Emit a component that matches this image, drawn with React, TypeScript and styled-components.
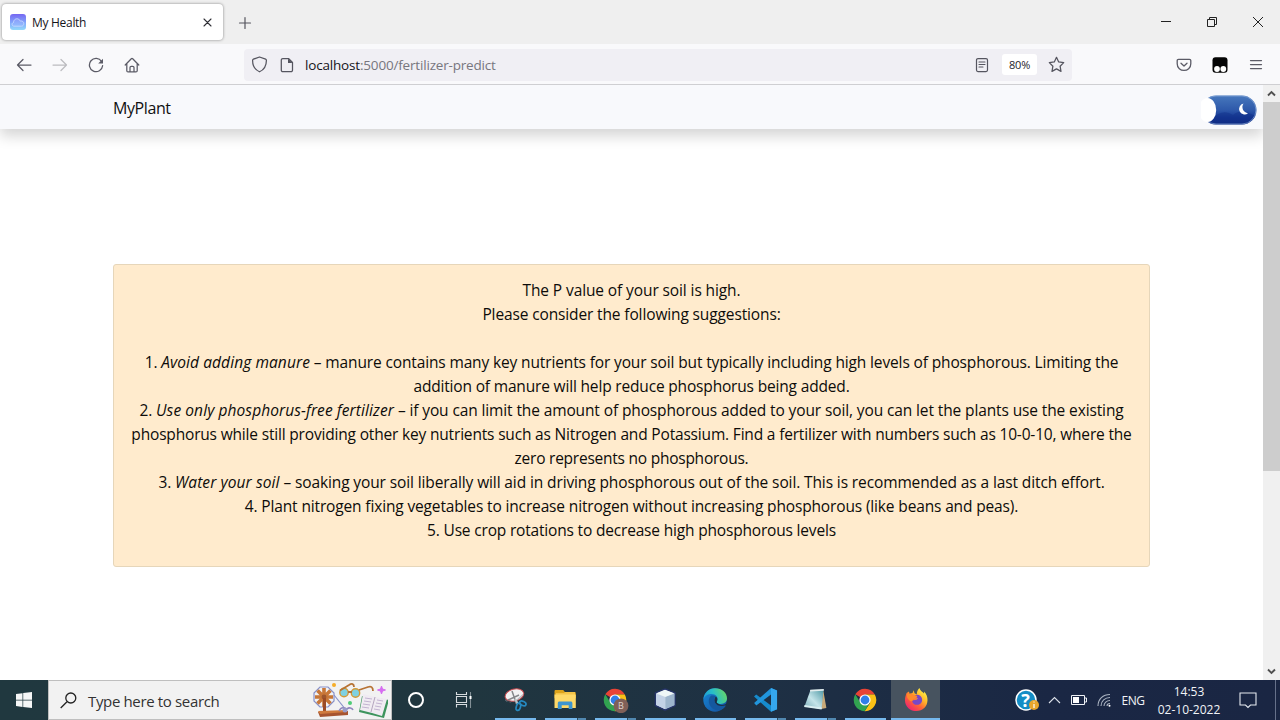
import React from 'react';
import styled, { createGlobalStyle } from 'styled-components';

const Global = createGlobalStyle`
  * { box-sizing: border-box; }
  body { margin: 0; background: #fff; overflow: hidden; font-family: "Open Sans", "Noto Sans", sans-serif; }
  svg { display: block; flex: none; }
`;

const Screen = styled.div`
  width: 1280px; height: 720px; display: flex; flex-direction: column; overflow: hidden; color: #15141a;
`;
const TitleBar = styled.header`
  height: 44px; background: #efefef; display: flex; align-items: flex-start; padding: 4px 0 0 2px;
`;
const Tab = styled.div`
  width: 221px; height: 36px; background: #fff; border-radius: 4px; box-shadow: 0 0 3px rgba(0,0,0,.45);
  display: flex; align-items: center; padding: 0 10px 0 8px;
`;
const TabTitle = styled.span`
  font-size: 12px; letter-spacing: -0.3px; margin-left: 6px; flex: 1; white-space: nowrap; line-height: 16px; padding-top: 1px;
`;
const NewTab = styled.div`
  width: 44px; height: 37px; display: grid; place-items: center;
`;
const WindowControls = styled.div`
  margin: 0 -1px 0 auto; height: 36px; display: flex; align-items: center;
`;
const ControlCell = styled.div`
  width: 46px; display: grid; place-items: center;
`;
const ToolBar = styled.div`
  height: 41px; background: #f9f9fb; border-bottom: 1px solid #cfcfd2; display: flex; align-items: center; padding: 1px 6px 0;
`;
const ToolCell = styled.div<{ $dim?: boolean }>`
  width: 36px; display: grid; place-items: center; color: ${p => (p.$dim ? '#bcbcc0' : '#5b5b66')};
`;
const UrlBar = styled.div`
  width: 828px; height: 32px; margin-left: 94px; background: #f0eff4; border-radius: 4px; display: flex; align-items: center;
  padding: 0 7px; color: #55555f;
`;
const PageInfo = styled.div`
  margin-left: 11px;
`;
const Url = styled.div`
  font-size: 13.5px; letter-spacing: -0.18px; color: #77767e; margin-left: 10px; flex: 1; white-space: nowrap;
  b { font-weight: 400; color: #15141a; }
`;
const Zoom = styled.div`
  width: 35px; height: 21px; background: #fff; border-radius: 3px; display: grid; place-items: center; color: #25242c;
  font-size: 11px; letter-spacing: -0.15px; margin: 0 11px 0 12px;
`;
const ToolsEnd = styled.div`
  margin-left: auto; display: flex; align-items: center;
`;
const Viewport = styled.div`
  height: 595px; display: flex; background: #fff;
`;
const Page = styled.main`
  width: 1263px; display: flex; flex-direction: column; overflow: hidden;
`;
const Nav = styled.nav`
  height: 44px; flex: none; background: #f8f9fc; box-shadow: 0 7px 14px rgba(0,0,0,.17); display: flex;
  align-items: center; justify-content: space-between; padding: 5px 6px 0 113px;
`;
const Brand = styled.div`
  font-size: 16px; letter-spacing: -0.4px; color: #111; line-height: 24px; padding-bottom: 4px;
`;
const Card = styled.section`
  width: 1037px; height: 303px; margin: 135px 0 0 113px; padding-top: 13px; background: #ffebcd; border: 1px solid #e6d6ba;
  border-radius: 3px; color: #0d0c0a;
`;
const Line = styled.div<{ $track: number }>`
  height: 24px; line-height: 24px; font-size: 15.5px; text-align: center; white-space: pre;
  letter-spacing: ${p => p.$track}px;
  i { letter-spacing: 0.09px; }
`;
const ScrollBar = styled.aside`
  width: 17px; background: #f0f0f0; display: flex; flex-direction: column; justify-content: space-between;
`;
const Arrow = styled.div`
  width: 17px; height: 17px; display: grid; place-items: center;
`;
const Thumb = styled.div`
  height: 369px; background: #cdcdcd; margin-bottom: auto;
`;
const TaskBar = styled.footer`
  height: 40px; display: flex; background: linear-gradient(90deg, #20383f 0, #20363f 37%, #1e3044 60%, #1a2744 82%, #1a2643 100%);
  color: #f2f4f7;
`;
const Start = styled.div`
  width: 48px; display: grid; place-items: center;
`;
const Search = styled.div`
  width: 344px; background: #f2f2f2; border: 1px solid #bfbfbf; display: flex; align-items: center; color: #333; padding: 0 3px 0 11px;
`;
const SearchText = styled.span`
  font-size: 15px; letter-spacing: -0.35px; margin-left: 11px; flex: 1; white-space: nowrap; padding-top: 2px;
`;
const SysCell = styled.div<{ $w: number }>`
  width: ${p => p.$w}px; display: grid; place-items: center;
`;
const Apps = styled.div`
  display: flex; padding-left: 2px;
`;
const AppButton = styled.div<{ $active?: boolean }>`
  width: ${p => (p.$active ? 49 : 50)}px; margin-left: ${p => (p.$active ? 1 : 0)}px;
  background: ${p => (p.$active ? '#47535f' : 'transparent')};
  display: flex; flex-direction: column; align-items: center; justify-content: space-between; padding-top: 5px;
`;
const Underline = styled.div<{ $kind: 'one' | 'many' | 'active' }>`
  height: 2px; width: ${p => (p.$kind === 'active' ? '100%' : '41px')};
  background: ${p => (p.$kind === 'many' ? 'linear-gradient(90deg,#76b9ed 32px,#28485c 32px,#28485c 33px,#5188b0 33px)' : '#76b9ed')};
`;
const Tray = styled.div`
  margin-left: auto; display: flex;
`;
const Lang = styled.div`
  width: 34px; display: grid; place-items: center; font-size: 12px; letter-spacing: -0.4px; padding-top: 1px;
`;
const Clock = styled.div`
  width: 78px; display: flex; flex-direction: column; align-items: center; font-size: 12px; line-height: 18px;
  letter-spacing: 0; padding-top: 3px;
`;
const ShowDesktop = styled.div`
  width: 5px; border-left: 1px solid #66718a;
`;

const stroke = { fill: 'none', stroke: 'currentColor', strokeLinecap: 'round' as const, strokeLinejoin: 'round' as const };

const Favicon = () => (
  <svg width="16" height="16" viewBox="0 0 16 16">
    <defs><linearGradient id="fav" x1="0" y1="0" x2="0" y2="1"><stop offset="0" stopColor="#7667f2" /><stop offset=".55" stopColor="#82a8fb" /><stop offset="1" stopColor="#93d9fa" /></linearGradient></defs>
    <rect width="16" height="16" rx="3" fill="url(#fav)" />
    <path d="M4 12.2C1.8 12.2 1.2 9.2 3.5 8.5 3.5 5.4 6.8 3.7 9 5.5c.7.4 1.1 1 1.4 1.6 2-.5 3.4.7 3.4 2.4 0 1.6-.9 2.7-2.4 2.7z" fill="#a7baff" fillOpacity=".35" stroke="#c5d8ff" strokeWidth=".9" />
  </svg>
);
const Chrome = ({ profile }: { profile?: boolean }) => (
  <svg width="28" height="28" viewBox="0 0 28 28">
    <path d="M14 15 4.3 9.3A11.2 11.2 0 0 1 23.8 9.5H14z" fill="#e94335" />
    <path d="M23.8 9.5A11.2 11.2 0 0 1 13.6 26.2L19 18 14 9.5z" fill="#fbc116" />
    <path d="M4.3 9.3A11.2 11.2 0 0 0 13.6 26.2L18.7 17.8 14 15 9 17z" fill="#31a350" />
    <circle cx="14" cy="15" r="5.6" fill="#fff" /><circle cx="14" cy="15" r="4.4" fill="#317ee8" />
    {profile && <><circle cx="20" cy="20.8" r="7.4" fill="#806058" /><text x="20" y="24" textAnchor="middle" fontSize="9" fill="#ded2cd" fontFamily="Open Sans, sans-serif">B</text></>}
  </svg>
);
const Snip = () => (
  <svg width="28" height="28" viewBox="0 0 28 28">
    <ellipse cx="13.4" cy="10" rx="9.5" ry="5.9" fill="#f3f2f3" stroke="#c94b50" strokeWidth="1" transform="rotate(-15 13.4 10)" />
    <path d="M4 14c2 4 7 4 11 1l8-7c-2 5-8 9-14 9-3 0-5-1-5-3z" fill="#b7bcc0" />
    <path d="m11 6 4.5 13M7 15l11-5" stroke="#85878a" strokeWidth="1.5" />
    <path d="m14 14 3 5" stroke="#bbc3c7" strokeWidth="2" />
    <g fill="none" stroke="#2689c0" strokeWidth="1.7"><ellipse cx="17.4" cy="21.8" rx="2.1" ry="3.7" transform="rotate(18 17.4 21.8)" /><ellipse cx="21.8" cy="18.4" rx="3.4" ry="2" transform="rotate(25 21.8 18.4)" /></g>
  </svg>
);
const Folder = () => (
  <svg width="28" height="28" viewBox="0 0 28 28">
    <path d="M3.5 6.3c0-.8.5-1.3 1.3-1.3h7.4l1.7 2h9.7c.8 0 1.2.5 1.2 1.2v5H3.5z" fill="#dda31b" /><path d="M5 8h8l1-1h10v4H5z" fill="#f4c448" />
    <path d="M3.5 9.5h21.3V23H3.5z" fill="#ffd968" /><path d="M6.8 24v-5.7c0-1 .7-1.7 1.7-1.7h11.2c1 0 1.7.7 1.7 1.7V24h-3.7v-3.8h-7V24z" fill="#3d95d0" />
  </svg>
);
const Cube = () => (
  <svg width="28" height="28" viewBox="0 0 28 28">
    <path d="M14 4 24 8v12.5L14 25 4.5 20.5V8z" fill="#dce7ef" stroke="#263468" strokeWidth="1.6" />
    <path d="M14.2 12 23.5 8.4v11.8l-9.3 4.1z" fill="#9db5cc" /><path d="m5 8.4 9.2 3.6v12.3L5 20z" fill="#c3d2e6" /><path d="m14 4.7 9.2 3.5-9 3.6-8.8-3.6z" fill="#eff7f7" />
  </svg>
);
const Edge = () => (
  <svg width="28" height="28" viewBox="0 0 28 28">
    <defs><linearGradient id="edgeTop" x1="0" y1=".6" x2="1" y2=".3"><stop stopColor="#1d9ad8" /><stop offset=".45" stopColor="#28bdc8" /><stop offset="1" stopColor="#67d765" /></linearGradient>
    <linearGradient id="edgeLow" x1="0" y1="0" x2="1" y2="1"><stop stopColor="#1688d8" /><stop offset="1" stopColor="#164f9c" /></linearGradient></defs>
    <circle cx="14" cy="15" r="11.7" fill="url(#edgeLow)" />
    <path d="M2.5 14.5C3 7.8 8 3.3 14 3.3c7 0 12.2 4.6 12 10.3-.1 4.2-4 6-8.3 5.2-2-.4-2.8-1.3-1.8-2.5 2.4-4.3-1.8-7.8-6.5-7.2-3.5.4-6 2.4-6.9 5.4z" fill="url(#edgeTop)" />
    <path d="M9.8 10.8C5.3 15.5 8.5 24.6 17 25.5c4-.5 6.6-2.8 8-5-6.4 2-11.9-1.1-12-5.4 0-1.8.7-3 1.7-3.7-1.4-.9-3.2-1.1-4.9-.6z" fill="#15589f" />
    <path d="M16.6 18.2c2.8 2.2 6.3 2.3 9.2.4l-.5 1.4c-4.5 1.9-9.4 1-11.4-2.6-.9-2.5-.2-4.6 1-5.8 1.5 1.3 2 3.3 1 4.8-.4.7-.1 1.3.7 1.8z" fill="#1d3044" />
  </svg>
);
const Code = () => (
  <svg width="28" height="28" viewBox="0 0 28 28">
    <path d="m20.1 3 6 2.5v18.8L20 26.8 3 11.5 5.2 9.4 20 20.6z" fill="#168acb" /><path d="m20.1 3-17 15 2.2 2.4L20 9.5z" fill="#2195dc" /><path d="m20 3 6 2.5v18.8L20 26.8z" fill="#35a7ee" />
  </svg>
);
const Notepad = () => (
  <svg width="28" height="28" viewBox="0 0 28 28">
    <defs><linearGradient id="note" x1="1" y1="0" x2="0" y2="1"><stop stopColor="#4f98a4" /><stop offset=".55" stopColor="#c4e4e9" /><stop offset="1" stopColor="#78acb9" /></linearGradient></defs>
    <path d="m22.2 5 3.2 18-5.400 1z" fill="#c8aa79" /><path d="M9.500 5 22.500 4.500 20.600 24 3.500 21.500z" fill="url(#note)" /><path d="m9.200 4.800 13.600-.8v1.800L9 6.400z" fill="#e3eced" /><path d="m3.500 20 17.200 2.500-.1 2-17.500-2.500z" fill="#d9eef1" />
  </svg>
);
const Firefox = () => (
  <svg width="28" height="28" viewBox="0 0 28 28">
    <defs><linearGradient id="fox" x1=".85" y1=".1" x2=".2" y2=".9"><stop stopColor="#fff044" /><stop offset=".35" stopColor="#ffb52a" /><stop offset=".65" stopColor="#ff6335" /><stop offset="1" stopColor="#ee2a6b" /></linearGradient></defs>
    <path d="M4.600 8 7 6.600l.5 2.200 3-.9 1.200-2.600.8 3 2.300 1.200C14.600 6.800 16 4.600 17.400 3c.6 2.800 3.200 4 4.600 5.400l.3-1.800c2.400 3 3.300 5.500 3.200 8.700-.2 6.500-4.800 10.800-11 10.800S3 21.500 3 15.400c0-3 .7-5.200 1.600-7.400z" fill="url(#fox)" />
    <path d="M10.200 13.200c1.200-3 5.300-4.800 8-2.400 2.700 2.400 2.600 6.400-.2 8.200-3.300 2-7.800.3-8-3.600l4.500-.6 1.700-1.600z" fill="#7748c6" />
    <path d="M5.200 9.100 9 8.700l3.200 1.400 3.100.9-.8 2-3.400 1.300c-.4 2.200-1.500 2.400-3 1.600C5.600 14.500 4.400 12 5.200 9.100z" fill="#ff8a2b" />
  </svg>
);
const SearchArt = () => (
  <svg width="76" height="36" viewBox="0 0 76 36">
    <g fill="none" stroke="#8790c8" strokeWidth="1.2"><path d="m8 5 8 0 6 6v8l-6 6H8l-6-6v-8z" /><path d="m22 13 12 15" /></g>
    <g stroke="#c87738" strokeWidth="3.6"><path d="M12 6v19M3 15h18M5.500 8.500l13 13M18.500 8.500l-13 13" /></g>
    <circle cx="12" cy="15" r="2.400" fill="#9d562d" /><path d="M11 16h3v14h-3z" fill="#9b4b27" />
    <path d="m6 30 30-1v4L8 35z" fill="#a65430" /><path d="m6 29 29-1v2L8 32z" fill="#cf7a3e" />
    <path d="M27 29c3-6 7-2 8-2 2-2 5-1 6 1" fill="none" stroke="#8f86bd" strokeWidth="1.600" /><circle cx="33" cy="28" r="2.500" fill="#9a9cc7" />
    <circle cx="22" cy="3" r="2" fill="#f6ad28" /><circle cx="38" cy="21" r="2" fill="#4fcc76" />
    <g fill="#7ed1e1" stroke="#d39a36" strokeWidth="1.400"><circle cx="32" cy="10.500" r="4.200" /><circle cx="43.500" cy="11" r="4.200" /></g>
    <g fill="none" stroke="#b77335" strokeWidth="1.800"><path d="M28 8.500 37 3c3-2 5-1 5 2M47 8l9-3c3-1 5 0 5 4M36 10h4" /></g>
    <path d="m50 14-3 16 25 6 5-18z" fill="#3d945d" /><path d="m51 12 12 3 12 2-5 17-10-3-12-3z" fill="#f0ebf2" /><path d="m63 15-4 15" stroke="#b5a5bf" />
    <g stroke="#b6a5c8" strokeWidth=".8"><path d="m53 16 7 1m-8 2 7 1m-8 2 7 1m-8 2 7 1M65 18l6 1m-7 2 6 1m-7 2 6 1m-7 2 6 1" /></g>
    <path d="m69.500 4 1 3 3 1-3 1-1 3-1-3-3-1 3-1z" fill="#d66df0" stroke="#d66df0" />
  </svg>
);
const Toggle = () => (
  <svg width="56" height="30" viewBox="0 0 56 30">
    <defs><linearGradient id="sky" x1="0" y1="0" x2="0" y2="1"><stop stopColor="#4778bd" /><stop offset=".5" stopColor="#2e59aa" /><stop offset=".75" stopColor="#163895" /><stop offset="1" stopColor="#102a80" /></linearGradient>
    <clipPath id="pill"><rect x=".5" y=".5" width="55" height="29" rx="14.500" /></clipPath></defs>
    <rect x=".5" y=".5" width="55" height="29" rx="14.500" fill="url(#sky)" />
    <g clipPath="url(#pill)"><path d="M10 24q12-11 22-4 8-8 24 2v10H10z" fill="#102e88" fillOpacity=".45" /></g>
    <rect x="1" y="1" width="54" height="28" rx="14" fill="none" stroke="#8faedb" strokeOpacity=".65" />
    <path d="M0 0h8L5 4v22l3 4H0z" fill="#f8f9fc" /><ellipse cx="6.500" cy="15" rx="8.700" ry="12" fill="#fff" />
    <path d="M42.500 8.500A5.500 5.500 0 1 0 47 18.200 6.200 6.200 0 0 1 42.500 8.500z" fill="#fff" />
  </svg>
);

const apps: { icon: React.ReactNode; kind: 'one' | 'many' | 'active' }[] = [
  { icon: <Snip />, kind: 'one' }, { icon: <Folder />, kind: 'many' }, { icon: <Chrome profile />, kind: 'many' },
  { icon: <Cube />, kind: 'one' }, { icon: <Edge />, kind: 'one' }, { icon: <Code />, kind: 'many' },
  { icon: <Notepad />, kind: 'many' }, { icon: <Chrome />, kind: 'one' }, { icon: <Firefox />, kind: 'active' },
];

const lines: { text: React.ReactNode; track: number }[] = [
  { text: 'The P value of your soil is high.', track: -0.106 },
  { text: 'Please consider the following suggestions:', track: -0.13 },
  { text: ' ', track: 0 },
  { text: <>1. <i>Avoid adding manure</i> – manure contains many key nutrients for your soil but typically including high levels of phosphorous. Limiting the</>, track: -0.136 },
  { text: 'addition of manure will help reduce phosphorus being added.', track: -0.17 },
  { text: <>2. <i>Use only phosphorus-free fertilizer</i> – if you can limit the amount of phosphorous added to your soil, you can let the plants use the existing</>, track: -0.12 },
  { text: 'phosphorus while still providing other key nutrients such as Nitrogen and Potassium. Find a fertilizer with numbers such as 10-0-10, where the', track: -0.177 },
  { text: 'zero represents no phosphorous.', track: -0.24 },
  { text: <>3. <i>Water your soil</i> – soaking your soil liberally will aid in driving phosphorous out of the soil. This is recommended as a last ditch effort.</>, track: -0.115 },
  { text: '4. Plant nitrogen fixing vegetables to increase nitrogen without increasing phosphorous (like beans and peas).', track: -0.145 },
  { text: '5. Use crop rotations to decrease high phosphorous levels', track: -0.18 },
];

export default function App() {
  return (
    <Screen>
      <Global />
      <TitleBar>
        <Tab>
          <Favicon />
          <TabTitle>My Health</TabTitle>
          <svg width="11" height="11" viewBox="0 0 11 11" color="#303036"><path d="m2 2 7 7m0-7-7 7" {...stroke} strokeWidth="1.100" /></svg>
        </Tab>
        <NewTab><svg width="14" height="14" viewBox="0 0 14 14" color="#55555e"><path d="M7 1.500v11M1.500 7h11" {...stroke} strokeWidth="1.200" /></svg></NewTab>
        <WindowControls>
          <ControlCell><svg width="12" height="12" viewBox="0 0 12 12"><path d="M1 5.500h10" stroke="#222" /></svg></ControlCell>
          <ControlCell><svg width="12" height="12" viewBox="0 0 12 12"><path d="M1.500 3.500h7v7h-7zM3.500 3.500v-2h7v7h-2" fill="none" stroke="#222" /></svg></ControlCell>
          <ControlCell><svg width="12" height="12" viewBox="0 0 12 12"><path d="m1 1 10 10M11 1 1 11" stroke="#222" /></svg></ControlCell>
        </WindowControls>
      </TitleBar>
      <ToolBar>
        <ToolCell><svg width="16" height="16" viewBox="0 0 16 16"><path d="M15 8H1.500M7 2.500 1.500 8 7 13.500" {...stroke} strokeWidth="1.250" /></svg></ToolCell>
        <ToolCell $dim><svg width="16" height="16" viewBox="0 0 16 16"><path d="M1 8h13.500M9 2.500 14.500 8 9 13.500" {...stroke} strokeWidth="1.250" /></svg></ToolCell>
        <ToolCell><svg width="16" height="16" viewBox="0 0 16 16"><path d="M13.600 4.500A6.600 6.600 0 1 0 14.600 8.700" {...stroke} strokeWidth="1.300" /><path d="M15 1.700v4.800h-4.800z" fill="currentColor" /></svg></ToolCell>
        <ToolCell><svg width="16" height="16" viewBox="0 0 16 16"><path d="M1.200 8 7.300 1.700a1 1 0 0 1 1.400 0L14.800 8M2.800 6.800v6.900c0 .7.500 1.200 1.200 1.200h8c.7 0 1.200-.5 1.200-1.200V6.800M6 14.500v-4c0-.7.500-1.200 1.200-1.200h1.600c.7 0 1.200.5 1.200 1.200v4" {...stroke} strokeWidth="1.250" /></svg></ToolCell>
        <UrlBar>
          <svg width="17" height="17" viewBox="0 0 17 17"><path d="M8.500 1 14.600 3.200q.8.300.8 1.200c0 5.200-1.800 9-6.900 11.400-5.100-2.400-6.900-6.200-6.900-11.400q0-.9.800-1.200z" {...stroke} strokeWidth="1.250" /></svg>
          <PageInfo><svg width="16" height="16" viewBox="0 0 16 16"><path d="M3.800 1.500h5.700l4 4v7.700a1.500 1.500 0 0 1-1.500 1.500H3.800a1.500 1.500 0 0 1-1.500-1.500V3a1.500 1.500 0 0 1 1.500-1.500z" {...stroke} strokeWidth="1.250" /><path d="M9 1.500 13.500 6H9z" fill="currentColor" /></svg></PageInfo>
          <Url><b>localhost</b>:5000/fertilizer-predict</Url>
          <svg width="16" height="16" viewBox="0 0 16 16"><rect x="2.500" y="1.600" width="11" height="13" rx="1.500" {...stroke} strokeWidth="1.200" /><path d="M5 5h6M5 7.500h6M5 10h4" {...stroke} strokeWidth="1.100" /></svg>
          <Zoom>80%</Zoom>
          <svg width="17" height="17" viewBox="0 0 17 17"><path d="m8.500 1.300 2.200 4.600 5 .7-3.600 3.600.9 5.200-4.500-2.500L4 15.400l.9-5.200-3.600-3.600 5-.7z" {...stroke} strokeWidth="1.250" /></svg>
        </UrlBar>
        <ToolsEnd>
          <ToolCell><svg width="16" height="16" viewBox="0 0 16 16"><path d="M2.500 2.300h11c.8 0 1.300.5 1.300 1.300v3.100c0 9-13.600 9-13.600 0V3.600c0-.8.500-1.300 1.300-1.300zM5 6.300l3 2.800 3-2.800" {...stroke} strokeWidth="1.300" /></svg></ToolCell>
          <ToolCell><svg width="16" height="16" viewBox="0 0 16 16"><rect x=".5" y=".3" width="15" height="15.400" rx="3" fill="#050505" /><circle cx="5" cy="12" r="2.900" fill="#fff" /><circle cx="11.300" cy="12" r="2.900" fill="#fff" /></svg></ToolCell>
          <ToolCell><svg width="14" height="14" viewBox="0 0 14 14"><path d="M1.500 2.500h11M1.500 6.500h11M1.500 10.500h11" {...stroke} strokeWidth="1.250" /></svg></ToolCell>
        </ToolsEnd>
      </ToolBar>
      <Viewport>
        <Page>
          <Nav><Brand>MyPlant</Brand><Toggle /></Nav>
          <Card>{lines.map((l, i) => <Line key={i} $track={l.track}>{l.text}</Line>)}</Card>
        </Page>
        <ScrollBar>
          <Arrow><svg width="9" height="7" viewBox="0 0 9 7"><path d="m1 5.500 3.500-3.500L8 5.500" fill="none" stroke="#505050" strokeWidth="1.900" /></svg></Arrow>
          <Thumb />
          <Arrow><svg width="9" height="7" viewBox="0 0 9 7"><path d="M1 1.500 4.500 5 8 1.500" fill="none" stroke="#505050" strokeWidth="1.900" /></svg></Arrow>
        </ScrollBar>
      </Viewport>
      <TaskBar>
        <Start><svg width="16" height="16" viewBox="0 0 16 16"><path d="m0 2 6.500-.8v6.500H0zM7.200 1.100 16 0v7.700H7.200zM0 8.400h6.500v6.500L0 14zM7.200 8.400H16V16l-8.800-1.100z" fill="#f5f6f6" /></svg></Start>
        <Search>
          <svg width="17" height="17" viewBox="0 0 17 17"><circle cx="10.800" cy="6" r="5" fill="none" stroke="#222" strokeWidth="1.300" /><path d="m7 9.700-6.300 6.300" stroke="#222" strokeWidth="1.300" /></svg>
          <SearchText>Type here to search</SearchText>
          <SearchArt />
        </Search>
        <SysCell $w={48}><svg width="18" height="18" viewBox="0 0 18 18"><circle cx="9" cy="9" r="7" fill="none" stroke="#fff" strokeWidth="2" /></svg></SysCell>
        <SysCell $w={48}><svg width="18" height="18" viewBox="0 0 18 18"><g fill="none" stroke="#d6dbde" strokeWidth="1.100"><path d="M1.500 1v2.500h10V1M1.500 5.500h10v6h-10zM1.500 16.500v-3h10v3" /><path d="M15.500 1v16" strokeOpacity=".55" /></g><path d="M14.500 5h2v3h-2z" fill="#fff" /></svg></SysCell>
        <Apps>{apps.map((a, i) => <AppButton key={i} $active={a.kind === 'active'}>{a.icon}<Underline $kind={a.kind} /></AppButton>)}</Apps>
        <Tray>
          <SysCell $w={30}><svg width="26" height="24" viewBox="0 0 26 24"><circle cx="12" cy="12" r="10" fill="#158dc5" stroke="#fff" strokeWidth="1.500" /><text x="11.500" y="18.500" textAnchor="middle" fontSize="18" fontWeight="700" fill="#fff">?</text><circle cx="20" cy="17" r="5" fill="#e9a62c" /><path d="M20 16v4M20 13.500v1" stroke="#fff" strokeWidth="1.200" /></svg></SysCell>
          <SysCell $w={25}><svg width="13" height="8" viewBox="0 0 13 8"><path d="m1 7 5.500-5.500L12 7" fill="none" stroke="#dce1e8" strokeWidth="1.100" /></svg></SysCell>
          <SysCell $w={24}><svg width="16" height="10" viewBox="0 0 16 10"><path d="M.5.500h13v9H.5zM14 3h1.500v4H14" fill="none" stroke="#eef1f5" /><path d="M2 2h6v6H2z" fill="#fff" /></svg></SysCell>
          <SysCell $w={25}><svg width="14" height="14" viewBox="0 0 14 14"><g fill="none" stroke="#aab3c1" strokeWidth="1.100"><path d="M1 13C1 6 6 1.500 13 1.500M4 13c0-5 4-8.500 9-8.500M7 13c0-3 2.700-5.500 6-5.500M10 13c0-1.500 1.300-2.500 3-2.500" /></g><circle cx="12.500" cy="12.700" r="1" fill="#fff" /></svg></SysCell>
          <Lang>ENG</Lang>
          <Clock><span>14:53</span><span>02-10-2022</span></Clock>
          <SysCell $w={39}><svg width="18" height="17" viewBox="0 0 18 17"><path d="M1 1h16v12h-5.500L9 15.500 6.500 13H1z" fill="none" stroke="#e6eaf0" strokeWidth="1.100" /></svg></SysCell>
          <SysCell $w={8} />
          <ShowDesktop />
        </Tray>
      </TaskBar>
    </Screen>
  );
}
